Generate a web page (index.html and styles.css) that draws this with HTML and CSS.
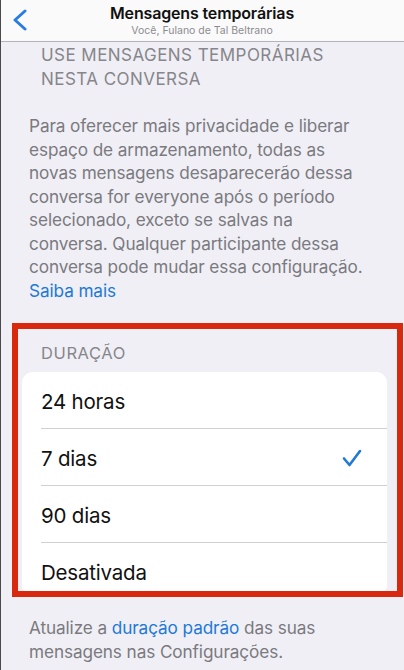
FILE: index.html
```html
<!DOCTYPE html>
<html lang="pt-BR">
<head>
<meta charset="utf-8">
<title>Mensagens temporárias</title>
<link rel="stylesheet" href="styles.css">
</head>
<body>
<div class="screen">
  <header class="navbar">
    <button class="back" aria-label="Voltar">
      <svg width="16" height="22" viewBox="0 0 16 22"><path d="M13 2 L3 11 L13 20" fill="none" stroke="currentColor" stroke-width="3" stroke-linecap="round" stroke-linejoin="round"/></svg>
    </button>
    <div class="titles">
      <div class="title">Mensagens temporárias</div>
      <div class="subtitle">Você, Fulano de Tal Beltrano</div>
    </div>
  </header>

  <h2 class="section-title">USE MENSAGENS TEMPORÁRIAS<br>NESTA CONVERSA</h2>

  <p class="note">Para oferecer mais privacidade e liberar<br>espaço de armazenamento, todas as<br>novas mensagens desaparecerão dessa<br>conversa for everyone após o período<br>selecionado, exceto se salvas na<br>conversa. Qualquer participante dessa<br>conversa pode mudar essa configuração.<br><a class="link" href="#">Saiba mais</a></p>

  <h3 class="group-title">DURAÇÃO</h3>
  <ul class="options">
    <li class="option">24 horas</li>
    <li class="option selected">7 dias
      <svg class="check" width="20" height="18" viewBox="0 0 20 18"><path d="M2 9.5 L7.5 16 L18 2" fill="none" stroke="currentColor" stroke-width="2.6" stroke-linecap="round" stroke-linejoin="round"/></svg>
    </li>
    <li class="option">90 dias</li>
    <li class="option last">Desativada</li>
  </ul>

  <p class="footer-note">Atualize a <a class="link" href="#">duração padrão</a> das suas<br>mensagens nas Configurações.</p>

  <div class="highlight"></div>
</div>
</body>
</html>
```
FILE: styles.css
```css
* { box-sizing: border-box; }

html, body {
  margin: 0;
  padding: 0;
}

body {
  background: #f0eff5;
  font-family: Inter, "Noto Sans", sans-serif;
  -webkit-font-smoothing: antialiased;
}

.screen {
  position: relative;
  width: 404px;
  height: 670px;
  overflow: hidden;
}

/* thin dark edge along the left side of the screen */
.screen::before {
  content: "";
  position: absolute;
  left: 0;
  top: 0;
  bottom: 0;
  width: 1px;
  background: #4a4a4c;
  z-index: 2;
}

.navbar {
  position: relative;
  height: 42px;
  background: #fafafa;
  border-bottom: 1px solid #b4b4b8;
  display: flex;
  justify-content: center;
  padding-top: 3px;
}

.back {
  position: absolute;
  left: 12px;
  top: 9px;
  border: 0;
  background: none;
  padding: 0;
  color: #2a7de0;
  display: flex;
}

.titles {
  display: flex;
  flex-direction: column;
  align-items: center;
}

.title {
  font-size: 16px;
  line-height: 20px;
  font-weight: 600;
  color: #111;
  letter-spacing: -0.15px;
}

.subtitle {
  font-size: 10.5px;
  line-height: 14px;
  color: #8c8c90;
  margin-top: 1px;
}

.section-title {
  margin: 1px 0 0;
  padding-left: 41px;
  font-size: 17px;
  line-height: 24px;
  font-weight: 400;
  color: #86868b;
  letter-spacing: 0.45px;
}

.note {
  margin: 23px 0 0;
  padding-left: 29px;
  font-size: 17.2px;
  line-height: 23.5px;
  color: #7a7a7f;
  letter-spacing: -0.1px;
  white-space: nowrap;
}

.link {
  color: #2179d6;
  text-decoration: none;
}

.group-title {
  margin: 39px 0 0;
  padding-left: 41px;
  font-size: 16.5px;
  line-height: 24px;
  font-weight: 400;
  color: #86868b;
  letter-spacing: 0.6px;
}

.options {
  list-style: none;
  margin: 7px 0 0 22px;
  padding: 0 0 0 19px;
  width: 365px;
  background: #fff;
  border-radius: 11px;
}

.option {
  position: relative;
  height: 57px;
  display: flex;
  align-items: center;
  padding-top: 2px;
  font-size: 20.5px;
  color: #111;
  letter-spacing: -0.2px;
  border-bottom: 1px solid #d0d0d4;
}

.option.last {
  border-bottom: 0;
  height: 53px;
  padding-top: 5px;
}

.check {
  position: absolute;
  right: 25px;
  top: 20px;
  color: #2179d6;
}

.footer-note {
  margin: 20px 0 0;
  padding-left: 29px;
  font-size: 17.2px;
  line-height: 24px;
  color: #7a7a7f;
  letter-spacing: -0.1px;
  white-space: nowrap;
}

/* red outline drawn over the duration group */
.highlight {
  position: absolute;
  left: 12px;
  top: 323px;
  width: 391px;
  height: 274px;
  border: 6px solid #d8290f;
  pointer-events: none;
}
```
